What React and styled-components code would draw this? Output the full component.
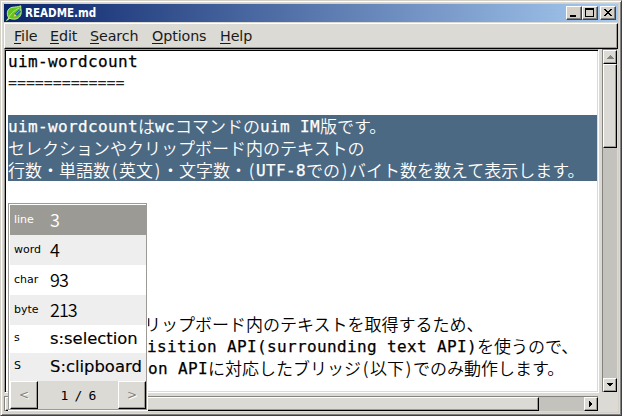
import React from 'react';
import styled, { createGlobalStyle } from 'styled-components';

const Global = createGlobalStyle`
  * { box-sizing: border-box; }
  html, body { margin: 0; padding: 0; overflow: hidden; }
`;

const Window = styled.div`
  position: relative;
  width: 622px;
  height: 416px;
  padding: 2px;
  background: #dcdad5;
  border: 1px solid;
  border-color: #d4d0c8 #404040 #404040 #d4d0c8;
  box-shadow: inset 1px 1px #fff, inset -1px -1px #808080;
  font-family: 'DejaVu Sans', sans-serif;
  display: flex;
  flex-direction: column;
`;

const Frame = styled.div`
  border: 1px solid #d4d0c8;
  flex: 1;
  min-height: 0;
  display: flex;
  flex-direction: column;
`;

const TitleBar = styled.header`
  height: 18px;
  flex: none;
  display: flex;
  align-items: center;
  padding: 0 2px;
  background: linear-gradient(to right, #0a246a, #a6caf0);
`;

const AppIcon = styled.svg`
  width: 16px;
  height: 16px;
  flex: none;
`;

const Title = styled.span`
  flex: 1;
  margin-left: 3px;
  color: #fff;
  font-family: 'DejaVu Sans Condensed', 'DejaVu Sans', sans-serif;
  font-stretch: condensed;
  font-size: 11.5px;
  font-weight: 700;
  line-height: 18px;
`;

const CaptionButton = styled.button`
  width: 16px;
  height: 14px;
  padding: 0;
  margin: 0 0 0 ${p => p.$gap || 0}px;
  background: #d4d0c8;
  border: 1px solid;
  border-color: #fff #404040 #404040 #fff;
  box-shadow: inset -1px -1px #808080;
  display: block;
  svg { display: block; }
`;

const MenuBar = styled.nav`
  height: 26px;
  flex: none;
  margin-top: 1px;
  display: flex;
  align-items: center;
  padding: 0 0 0 9px;
  gap: 14px;
  border: 1px solid;
  border-color: #fff #000 #000 #fff;
  box-shadow: inset -1px -1px #9c9a94;
`;

const MenuItem = styled.span`
  font-size: 14.3px;
  line-height: 20px;
  width: ${p => p.$w}px;
  white-space: nowrap;
  letter-spacing: -0.1px;
  color: #1a1a1a;
  u { text-decoration-thickness: 1px; text-underline-offset: 2px; }
`;

const Body = styled.div`
  display: grid;
  grid-template-columns: 595px 15px;
  grid-template-rows: 344px 15px;
  column-gap: 3px;
  row-gap: 3px;
`;

const Editor = styled.main`
  overflow: hidden;
  background: #fff;
  border: 1px solid;
  border-color: #9c9a94 #fff #fff #9c9a94;
  box-shadow: inset 1px 1px #000, inset -1px -1px #dcdad5;
  padding-left: 3px;
`;

const Lines = styled.div`
  margin-top: -1px;
  font-size: 17px;
`;

const Line = styled.div`
  height: 22px;
  line-height: 21px;
  white-space: pre;
  display: flex;
  width: 589px;
  padding-top: ${p => p.$drop || 0}px;
  padding-left: ${p => p.$indent || 0}px;
  color: ${p => (p.$selected ? '#fff' : '#000')};
  background: ${p => (p.$selected ? '#4b6983' : 'transparent')};
`;

const Latin = styled.span`
  font-family: 'DejaVu Sans Mono', monospace;
  font-size: 16px;
  line-height: 24px;
  letter-spacing: 0.367px;
  font-weight: 400;
  -webkit-text-stroke: 0.25px currentColor;
`;

const Kana = styled.span`
  font-family: 'Noto Sans CJK JP', sans-serif;
  font-weight: 350;
`;

const Narrow = styled.span`
  font-family: 'Noto Sans CJK JP', sans-serif;
  width: 9px;
  text-align: center;
  font-weight: 350;
`;

const Rule = styled.span`
  font-family: 'DejaVu Sans Mono', monospace;
  font-size: 15px;
  line-height: 22px;
  letter-spacing: -0.08px;
  color: #222;
`;

const Trough = styled.div`
  display: flex;
  flex-direction: ${p => (p.$vertical ? 'column' : 'row')};
  margin: ${p => (p.$vertical ? '0 0 1px' : '0 1px 0 0')};
  background: #c4c2bd;
  border: 0 solid #85837d;
  border-width: 1px 0 0 1px;
`;

const Raised = styled.div`
  flex: ${p => (p.$size ? `0 0 ${p.$size}px` : '1')};
  background: #dcdad5;
  border: 1px solid;
  border-color: #fff #000 #000 #fff;
  box-shadow: inset -1px -1px #9c9a94;
  display: flex;
  align-items: center;
  justify-content: center;
`;

const Spacer = styled.div`
  flex: 1;
`;

const Popup = styled.section`
  position: absolute;
  left: 7px;
  top: 202px;
  width: 140px;
  height: 208px;
  background: #fff;
`;

const PopupFrame = styled.div`
  width: 139px;
  height: 207px;
  border: 1px solid #9c9a94;
  padding: 1px 0 0 1px;
`;

const Candidate = styled.div`
  height: ${p => p.$h}px;
  display: flex;
  align-items: center;
  padding-left: 4px;
  background: ${p => (p.$selected ? '#9c9a94' : p.$odd ? '#eeeeee' : '#fff')};
  color: ${p => (p.$selected ? '#fff' : '#000')};
`;

const Heading = styled.span`
  width: 36px;
  flex: none;
  font-size: 11px;
  line-height: 16px;
  margin-top: ${p => (p.$raised ? -2 : 0)}px;
`;

const Value = styled.span`
  font-size: ${p => (p.$digits ? 18 : 16.4)}px;
  font-family: ${p => (p.$digits ? "'Noto Sans CJK JP'" : "'DejaVu Sans'")}, sans-serif;
  font-weight: ${p => (p.$digits ? 350 : 400)};
  letter-spacing: ${p => (p.$digits ? '-1px' : '0')};
  line-height: 22px;
  margin-top: ${p => (p.$digits ? -2 : 0)}px;
  white-space: nowrap;
  -webkit-text-stroke: ${p => (p.$digits ? 0 : 0.15)}px currentColor;
`;

const Pager = styled.footer`
  height: 28px;
  display: flex;
  background: #dcdad5;
`;

const PageLabel = styled.span`
  width: 80px;
  text-align: center;
  font: 13px/29px 'DejaVu Sans Mono', monospace;
  letter-spacing: -0.8px;
`;

const Arrow = styled.span`
  font-size: 12px;
  color: #85837d;
  text-shadow: 1px 1px #fff;
`;

const menu = [['F', 'ile', 22], ['E', 'dit', 26], ['S', 'earch', 48], ['O', 'ptions', 54], ['H', 'elp', 31]];

const rows = [
  ['line', '3', 30], ['word', '4', 30], ['char', '93', 30],
  ['byte', '213', 30], ['s', 's:selection', 28], ['S', 'S:clipboard', 28],
];

function Triangle({ points, fill = '#000' }) {
  return (
    <svg width="8" height="8" viewBox="0 0 8 8" shapeRendering="crispEdges">
      <polygon points={points} fill={fill} />
    </svg>
  );
}

export default function App() {
  return (
    <Window>
      <Global />
      <Frame>
        <TitleBar>
          <AppIcon viewBox="0 0 16 16">
            <path d="M.6 15.4 L2.6 13 C0 8 1.6 3.2 6 2.4 C9 1.8 12 2.2 14.8 .8 C14.4 4 16.6 8.6 13.4 12 C11 14.6 7 14.6 3.8 13.4 Z" fill="#62c51b" stroke="#c4f08d" strokeWidth="1" />
            <path d="M2.6 13 C4 9 8 6 13 3" stroke="#b5ec72" fill="none" />
            <path d="M7.5 12 L8.6 8.8 L13 4.6 L15 6.8 L10.8 11 Z" fill="#1f5fae" />
            <path d="M9.8 9.4 L13.8 5.4" stroke="#6aa5e8" />
            <path d="M7.5 12 L8.6 8.8 L10.8 11 Z" fill="#fbd04a" />
          </AppIcon>
          <Title>README.md</Title>
          <CaptionButton aria-label="Minimize">
            <svg width="14" height="12"><rect x="3" y="8" width="6" height="2" /></svg>
          </CaptionButton>
          <CaptionButton aria-label="Maximize">
            <svg width="14" height="12" shapeRendering="crispEdges">
              <path d="M2 1h9v9H2z M3 3v6h7V3z" fillRule="evenodd" />
            </svg>
          </CaptionButton>
          <CaptionButton aria-label="Close" $gap={2}>
            <svg width="14" height="12" shapeRendering="crispEdges">
              <path d="M3 2h2v1h1v1h2v-1h1v-1h2v1h-1v1h-1v1h-1v1h1v1h1v1h1v1h-2v-1h-1v-1h-2v1h-1v1h-2v-1h1v-1h1v-1h1v-1h-1v-1h-1v-1h-1z" />
            </svg>
          </CaptionButton>
        </TitleBar>
        <MenuBar>
          {menu.map(([k, rest, w]) => (
            <MenuItem key={k} $w={w}><u>{k}</u>{rest}</MenuItem>
          ))}
        </MenuBar>
        <Body>
          <Editor>
            <Lines>
              <Line $drop={1}><Latin>uim-wordcount</Latin></Line>
              <Line $drop={1}><Rule>=============</Rule></Line>
              <Line />
              <Line $selected>
                <Latin>uim-wordcount</Latin><Kana>は</Kana><Latin>wc</Latin><Kana>コマンドの</Kana>
                <Latin>uim IM</Latin><Kana>版です。</Kana>
              </Line>
              <Line $selected><Kana>セレクションやクリップボード内のテキストの</Kana></Line>
              <Line $selected>
                <Kana>行数・単語数</Kana><Narrow>(</Narrow><Kana>英文</Kana><Narrow>)</Narrow>
                <Kana>・文字数・</Kana><Narrow>(</Narrow><Latin>UTF-8</Latin><Kana>での</Kana>
                <Narrow>)</Narrow><Kana>バイト数を数えて表示します。</Kana>
              </Line>
              <Line /><Line /><Line /><Line /><Line /><Line />
              <Line $indent={136}><Kana>リップボード内のテキストを取得するため、</Kana></Line>
              <Line $indent={139}><Latin>isition API(surrounding text API)</Latin><Kana>を使うので、</Kana></Line>
              <Line $indent={140}>
                <Latin>on API</Latin><Kana>に対応したブリッジ</Kana><Narrow>(</Narrow><Kana>以下</Kana>
                <Narrow>)</Narrow><Kana>でのみ動作します。</Kana>
              </Line>
            </Lines>
          </Editor>
          <Trough $vertical>
            <Raised $size={14}><Triangle points="4,2 8,6 0,6" fill="#85837d" /></Raised>
            <Raised $size={84} />
            <Spacer />
            <Raised $size={14}><Triangle points="1,2 7,2 4,6" /></Raised>
          </Trough>
          <Trough>
            <Raised $size={14} />
            <Raised $size={520} />
            <Spacer />
            <Raised $size={14}><Triangle points="2,1 6,4 2,7" /></Raised>
          </Trough>
        </Body>
      </Frame>
      <Popup>
        <PopupFrame>
          {rows.map(([label, value, h], i) => (
            <Candidate key={label} $h={h} $selected={i === 0} $odd={i % 2 === 1}>
              <Heading $raised={i > 3}>{label}</Heading>
              <Value $digits={i < 4}>{value}</Value>
            </Candidate>
          ))}
          <Pager>
            <Raised $size={28}><Arrow>&lt;</Arrow></Raised>
            <PageLabel>1 / 6</PageLabel>
            <Raised $size={28}><Arrow>&gt;</Arrow></Raised>
          </Pager>
        </PopupFrame>
      </Popup>
    </Window>
  );
}
